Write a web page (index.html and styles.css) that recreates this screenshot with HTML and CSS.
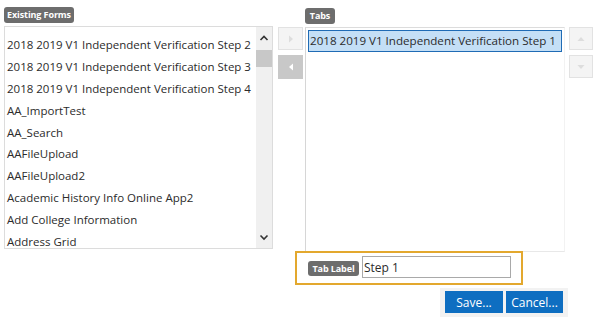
FILE: index.html
```html
<!DOCTYPE html>
<html>
<head>
<meta charset="utf-8">
<link rel="stylesheet" href="styles.css">
</head>
<body>
<div class="page">
  <div class="top-row">
    <div class="col-left">
      <span class="badge badge-forms">Existing Forms</span>
      <div class="listbox left-list">
        <div class="items">
          <div class="item">2018 2019 V1 Independent Verification Step 2</div>
          <div class="item">2018 2019 V1 Independent Verification Step 3</div>
          <div class="item">2018 2019 V1 Independent Verification Step 4</div>
          <div class="item">AA_ImportTest</div>
          <div class="item">AA_Search</div>
          <div class="item">AAFileUpload</div>
          <div class="item">AAFileUpload2</div>
          <div class="item">Academic History Info Online App2</div>
          <div class="item">Add College Information</div>
          <div class="item">Address Grid</div>
        </div>
        <div class="scrollbar">
          <div class="sb-btn">
            <svg width="10" height="8" viewBox="0 0 10 8"><path d="M1.5 6 L5 2.5 L8.5 6" fill="none" stroke="#333" stroke-width="1.6"/></svg>
          </div>
          <div class="sb-thumb"></div>
          <div class="sb-spacer"></div>
          <div class="sb-btn">
            <svg width="10" height="8" viewBox="0 0 10 8"><path d="M1.5 2.5 L5 6 L8.5 2.5" fill="none" stroke="#333" stroke-width="1.6"/></svg>
          </div>
        </div>
      </div>
    </div>
    <div class="col-mid">
      <div class="mv-btn mv-disabled">
        <svg width="6" height="8" viewBox="0 0 6 8"><path d="M1 0.5 L5 4 L1 7.5 Z" fill="#ddd"/></svg>
      </div>
      <div class="mv-btn mv-active">
        <svg width="6" height="8" viewBox="0 0 6 8"><path d="M5 0.5 L1 4 L5 7.5 Z" fill="#fff"/></svg>
      </div>
    </div>
    <div class="col-right">
      <span class="badge badge-tabs">Tabs</span>
      <div class="listbox right-list">
        <div class="item selected">2018 2019 V1 Independent Verification Step 1</div>
      </div>
    </div>
    <div class="col-order">
      <div class="mv-btn mv-disabled">
        <svg width="8" height="6" viewBox="0 0 8 6"><path d="M0.5 5 L4 1 L7.5 5 Z" fill="#ddd"/></svg>
      </div>
      <div class="mv-btn mv-disabled">
        <svg width="8" height="6" viewBox="0 0 8 6"><path d="M0.5 1 L4 5 L7.5 1 Z" fill="#ddd"/></svg>
      </div>
    </div>
  </div>
  <div class="label-row">
    <div class="label-box">
      <span class="badge badge-label">Tab Label</span>
      <input class="label-input" type="text" value="Step 1">
    </div>
  </div>
  <div class="action-row">
    <div class="actions">
      <button class="btn">Save...</button>
      <button class="btn">Cancel...</button>
    </div>
  </div>
</div>
</body>
</html>
```
FILE: styles.css
```css
* { box-sizing: border-box; }
html, body { margin: 0; padding: 0; background: #fff; }
body {
  font-family: "Open Sans", "DejaVu Sans", sans-serif;
  color: #2b2b2b;
  width: 599px;
  height: 319px;
  overflow: hidden;
}
.page { padding: 7px 0 0 4px; }
.top-row { display: flex; align-items: flex-start; height: 244px; }
.col-left { width: 269px; display: flex; flex-direction: column; align-items: flex-start; }
.col-mid { width: 25px; margin-left: 5px; margin-top: 20px; display: flex; flex-direction: column; gap: 5px; }
.col-right { width: 260px; margin-left: 2px; margin-top: 1px; display: flex; flex-direction: column; align-items: flex-start; }
.col-order { width: 24px; margin-left: 4px; margin-top: 20px; display: flex; flex-direction: column; gap: 5px; }

.badge {
  display: inline-block;
  background: #6d6d6d;
  color: #fff;
  font-weight: 700;
  font-size: 9px;
  line-height: 16px;
  height: 16px;
  padding: 0 4px;
  border-radius: 3px;
  letter-spacing: -0.1px;
}
.badge-forms { width: 70px; text-align: center; padding: 0; }
.badge-tabs { width: 30px; text-align: center; padding: 0; }

.listbox { border: 1px solid #dcdcdc; background: #fff; }
.left-list {
  margin-top: 3px;
  width: 269px;
  height: 223px;
  display: flex;
  overflow: hidden;
}
.items { flex: 1; min-width: 0; padding-top: 7px; overflow: hidden; white-space: nowrap; }
.item {
  height: 21.9px;
  line-height: 22px;
  font-size: 11.5px;
  padding-left: 2px;
  white-space: nowrap;
}
.scrollbar {
  width: 16px;
  flex: none;
  background: #f0f0f0;
  display: flex;
  flex-direction: column;
}
.sb-btn { height: 22px; display: flex; align-items: center; justify-content: center; }
.sb-thumb { height: 17px; margin: 1px 0 0; background: #c8c8c8; }
.sb-spacer { flex: 1; }

.mv-btn {
  width: 25px;
  height: 23px;
  display: flex;
  align-items: center;
  justify-content: center;
}
.col-order .mv-btn { width: 24px; }
.mv-disabled { background: #f4f4f4; border: 1px solid #e2e2e2; }
.mv-active { background: #c8c8c8; height: 24px; }

.right-list {
  margin-top: 3px;
  width: 260px;
  height: 225px;
  padding: 2px 2px;
  border-color: #dcdcdc #f2f2f2 #e8e8e8 #d6d6d6;
}
.item.selected {
  background: #c4dff6;
  border: 1px solid #1f6bb5;
  height: 22px;
  line-height: 20px;
  padding-left: 1px;
  font-size: 11.6px;
}

.label-row { display: flex; padding-left: 291px; }
.label-box {
  width: 228px;
  height: 34px;
  border: 2px solid #e3a82e;
  display: flex;
  align-items: center;
  padding-left: 11px;
  gap: 3px;
}
.badge-label { width: 51px; height: 15px; line-height: 15px; padding: 0; text-align: center; }
.label-input {
  width: 149px;
  height: 22px;
  border: 1px solid #a9a9a9;
  font-family: "Open Sans", sans-serif;
  font-size: 12px;
  color: #2b2b2b;
  padding: 0 1px;
  margin-top: -2px;
  outline: none;
}

.action-row { display: flex; padding-left: 436px; margin-top: 3px; }
.actions {
  background: #f2f2f2;
  padding: 3px 5px 4px 5px;
  display: flex;
  gap: 3px;
}
.btn {
  height: 22px;
  border: 0;
  background: #0e6ec1;
  color: #fff;
  font-family: "Open Sans", sans-serif;
  font-size: 12px;
  padding: 0;
  width: 58px;
}
.btn + .btn { width: 57px; }
```
